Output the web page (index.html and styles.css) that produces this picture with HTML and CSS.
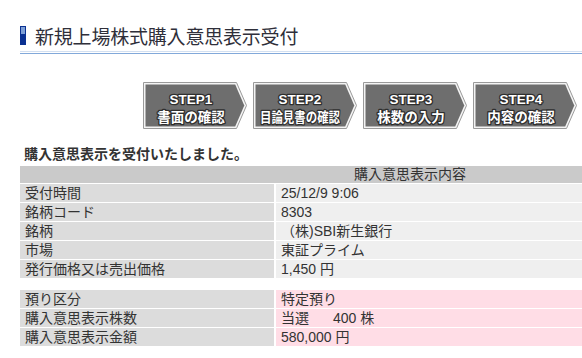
FILE: index.html
```html
<!DOCTYPE html>
<html lang="ja">
<head>
<meta charset="utf-8">
<title>新規上場株式購入意思表示受付</title>
<link rel="stylesheet" href="styles.css">
</head>
<body>
<div class="page">
  <h1 class="title"><span class="title-bar"></span><span class="title-text">新規上場株式購入意思表示受付</span></h1>
  <div class="title-rule"></div>

  <div class="steps">
    <svg class="step" width="104" height="48" viewBox="0 0 104 48">
      <polygon class="step-outer" points="0.5,0.5 93.5,0.5 103.5,23.5 93.5,46.5 0.5,46.5"/>
      <polygon class="step-inner" points="2.5,2.5 92.2,2.5 101.3,23.5 92.2,44.5 2.5,44.5"/>
      <text class="step-num" x="48" y="22">STEP1</text>
      <text class="step-label" x="48" y="40">書面の確認</text>
    </svg>
    <svg class="step" width="104" height="48" viewBox="0 0 104 48">
      <polygon class="step-outer" points="0.5,0.5 93.5,0.5 103.5,23.5 93.5,46.5 0.5,46.5"/>
      <polygon class="step-inner" points="2.5,2.5 92.2,2.5 101.3,23.5 92.2,44.5 2.5,44.5"/>
      <text class="step-num" x="47" y="22">STEP2</text>
      <text class="step-label" x="47" y="40" textLength="80" lengthAdjust="spacingAndGlyphs">目論見書の確認</text>
    </svg>
    <svg class="step" width="104" height="48" viewBox="0 0 104 48">
      <polygon class="step-outer" points="0.5,0.5 93.5,0.5 103.5,23.5 93.5,46.5 0.5,46.5"/>
      <polygon class="step-inner" points="2.5,2.5 92.2,2.5 101.3,23.5 92.2,44.5 2.5,44.5"/>
      <text class="step-num" x="48" y="22">STEP3</text>
      <text class="step-label" x="48" y="40">株数の入力</text>
    </svg>
    <svg class="step" width="104" height="48" viewBox="0 0 104 48">
      <polygon class="step-outer" points="0.5,0.5 93.5,0.5 103.5,23.5 93.5,46.5 0.5,46.5"/>
      <polygon class="step-inner" points="2.5,2.5 92.2,2.5 101.3,23.5 92.2,44.5 2.5,44.5"/>
      <text class="step-num" x="48" y="22">STEP4</text>
      <text class="step-label" x="48" y="40">内容の確認</text>
    </svg>
  </div>

  <p class="lead">購入意思表示を受付いたしました。</p>

  <table class="info">
    <colgroup><col class="col-label"><col class="col-value"></colgroup>
    <tr><th class="head" colspan="2">購入意思表示内容</th></tr>
    <tr><td class="label">受付時間</td><td class="value">25/12/9 9:06</td></tr>
    <tr><td class="label">銘柄コード</td><td class="value">8303</td></tr>
    <tr><td class="label">銘柄</td><td class="value">（株)SBI新生銀行</td></tr>
    <tr><td class="label">市場</td><td class="value">東証プライム</td></tr>
    <tr><td class="label">発行価格又は売出価格</td><td class="value">1,450 円</td></tr>
  </table>

  <table class="info info-order">
    <colgroup><col class="col-label"><col class="col-value"></colgroup>
    <tr><td class="label">預り区分</td><td class="value pink">特定預り</td></tr>
    <tr><td class="label">購入意思表示株数</td><td class="value pink">当選<span class="gap"></span>400 株</td></tr>
    <tr><td class="label">購入意思表示金額</td><td class="value pink">580,000 円</td></tr>
  </table>
</div>
</body>
</html>
```

FILE: styles.css
```css
html, body {
  margin: 0;
  padding: 0;
  background: #ffffff;
  overflow: hidden;
}

body {
  font-family: "Liberation Sans", "Noto Sans CJK JP", sans-serif;
  color: #333333;
  width: 582px;
  height: 358px;
}

.page {
  padding: 26px 0 0 20px;
  width: 780px;
}

.title {
  display: flex;
  align-items: center;
  margin: 0;
  height: 19px;
  font-weight: normal;
}

.title-bar {
  width: 6px;
  height: 19px;
  box-sizing: border-box;
  background: linear-gradient(to bottom, #7d9fd6 0, #7d9fd6 7px, #0a3192 7px, #0a3192 100%);
  border-left: 1px solid #0a3192;
  border-right: 1px solid #0a3192;
  border-top: 1px solid #0a3192;
}

.title-text {
  margin-left: 9px;
  font-size: 19px;
  line-height: 19px;
  color: #2f2f3a;
  font-family: "Noto Sans CJK JP", sans-serif;
  letter-spacing: -0.2px;
}

.title-rule {
  margin-top: 6px;
  width: 562px;
  height: 3px;
  border-top: 1px solid #d3e0f1;
  border-bottom: 1px solid #82a9da;
  box-sizing: border-box;
}

.steps {
  display: flex;
  gap: 6px;
  margin-top: 28px;
  padding-left: 123px;
  height: 48px;
}

.step {
  display: block;
  flex: none;
}

.step-outer {
  fill: #f4f4f4;
  stroke: #9a9a9a;
  stroke-width: 1;
}

.step-inner {
  fill: #6e6e6e;
}

.step-num {
  font-family: "Liberation Sans", sans-serif;
  font-weight: bold;
  font-size: 13.5px;
  fill: #ffffff;
  stroke: #2e2e2e;
  stroke-width: 2.6px;
  stroke-linejoin: round;
  paint-order: stroke;
  text-anchor: middle;
}

.step-label {
  font-family: "Noto Sans CJK JP", sans-serif;
  font-weight: bold;
  font-size: 13.5px;
  fill: #ffffff;
  stroke: #2e2e2e;
  stroke-width: 2.6px;
  stroke-linejoin: round;
  paint-order: stroke;
  text-anchor: middle;
}

.lead {
  margin: 14px 0 0 4px;
  font-size: 14px;
  line-height: 19px;
  font-weight: bold;
  color: #333333;
  font-family: "Noto Sans CJK JP", sans-serif;
}

.info {
  border-collapse: collapse;
  width: 780px;
  margin-top: 3px;
  font-size: 14px;
  table-layout: fixed;
}

.info-order {
  margin-top: 11px;
}

.col-label {
  width: 255px;
}

.info th,
.info td {
  height: 18px;
  padding: 0 0 0 5px;
  line-height: 18px;
  border-bottom: 1px solid #ffffff;
  white-space: nowrap;
  text-align: left;
  font-weight: normal;
}

.info .head {
  background: #cacaca;
  text-align: center;
  padding: 0;
  height: 17px;
  line-height: 17px;
}

.info .label {
  background: #dcdcdc;
  border-right: 2px solid #ffffff;
}

.info .value {
  background: #efefef;
}

.info .value.pink {
  background: #ffdde6;
}

.gap {
  display: inline-block;
  width: 24px;
}
```
